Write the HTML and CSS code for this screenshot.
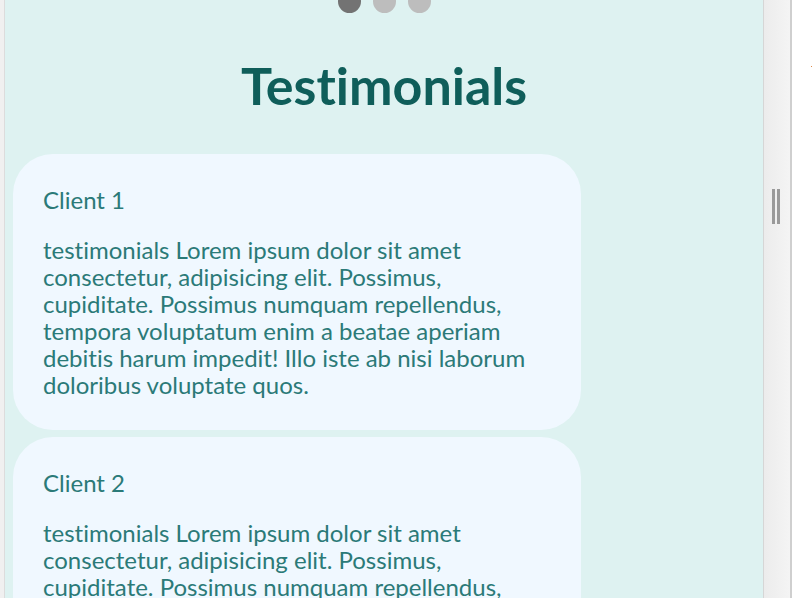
FILE: index.html
```html
<!DOCTYPE html>
<html lang="en">
<head>
<meta charset="utf-8">
<title>Testimonials</title>
<link rel="stylesheet" href="styles.css">
</head>
<body>
<div class="frame">
  <div class="gutter-left"></div>
  <main class="viewport">
    <div class="dots">
      <span class="dot dot-active"></span>
      <span class="dot"></span>
      <span class="dot"></span>
    </div>
    <h1 class="title">Testimonials</h1>
    <section class="list">
      <article class="card">
        <h3 class="client">Client 1</h3>
        <p class="quote">testimonials Lorem ipsum dolor sit amet consectetur, adipisicing elit. Possimus, cupiditate. Possimus numquam repellendus, tempora voluptatum enim a beatae aperiam debitis harum impedit! Illo iste ab nisi laborum doloribus voluptate quos.</p>
      </article>
      <article class="card">
        <h3 class="client">Client 2</h3>
        <p class="quote">testimonials Lorem ipsum dolor sit amet consectetur, adipisicing elit. Possimus, cupiditate. Possimus numquam repellendus, tempora voluptatum enim a beatae aperiam debitis harum impedit! Illo iste ab nisi laborum doloribus voluptate quos.</p>
      </article>
    </section>
  </main>
  <div class="handle-panel">
    <div class="grip"><span></span><span></span></div>
  </div>
  <div class="outside"><span class="speck"></span></div>
</div>
</body>
</html>
```
FILE: styles.css
```css
html, body {
  margin: 0;
  padding: 0;
  height: 100%;
  overflow: hidden;
  background: #ffffff;
}

.frame {
  display: flex;
  height: 598px;
  font-family: "Lato", "Liberation Sans", sans-serif;
  font-variant-ligatures: none;
}

.gutter-left {
  width: 4px;
  flex: none;
  background: #f0f0f0;
  border-right: 1px solid #dcdcdc;
}

.viewport {
  width: 758px;
  flex: none;
  background: #def2f1;
  overflow: hidden;
}

.dots {
  display: flex;
  justify-content: center;
  gap: 12px;
  margin-top: -10px;
  height: 23px;
}

.dot {
  width: 23px;
  height: 23px;
  border-radius: 50%;
  background: #bdbdbd;
}

.dot-active {
  background: #737373;
}

.title {
  margin: 41px 0 38px;
  text-align: center;
  font-family: "Lato", "Liberation Sans", sans-serif;
  font-weight: 700;
  font-size: 52px;
  line-height: 62px;
  color: #0f5e5a;
}

.list {
  display: flex;
  flex-direction: column;
  gap: 7px;
}

.card {
  width: 568px;
  margin-left: 8px;
  box-sizing: border-box;
  padding: 32px 30px;
  background: #f0f8ff;
  border-radius: 40px;
  color: #2b7a78;
}

.client {
  margin: 0 0 23px;
  font-weight: 400;
  font-size: 24px;
  line-height: 27px;
}

.quote {
  margin: 0;
  font-size: 24px;
  line-height: 27px;
}

.handle-panel {
  width: 26px;
  flex: none;
  border-left: 1px solid #d6d6d6;
  border-right: 2px solid #cfcfcf;
  background: linear-gradient(to right, #ececec, #f4f4f4);
}

.grip {
  display: flex;
  gap: 2px;
  margin: 189px 0 0 8px;
}

.grip span {
  width: 3px;
  height: 35px;
  background: #9a9a9a;
}

.outside {
  flex: 1;
  background: #ffffff;
}

.speck {
  display: block;
  width: 1px;
  height: 1px;
  margin: 66px 0 0 19px;
  background: #e08a4a;
}
```
